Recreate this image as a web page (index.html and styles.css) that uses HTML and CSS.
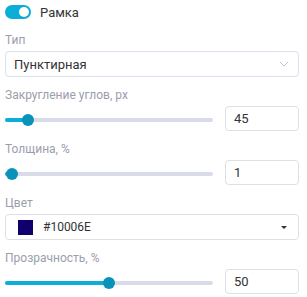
FILE: index.html
```html
<!DOCTYPE html>
<html lang="ru">
<head>
  <meta charset="UTF-8">
  <title>Рамка</title>
  <link rel="stylesheet" href="styles.css">
</head>
<body>
  <div class="panel">
    <!-- Переключатель -->
    <div class="toggle-row">
      <span class="toggle"><span class="knob"></span></span>
      <span class="toggle-label">Рамка</span>
    </div>

    <div class="field">
      <div class="label">Тип</div>
      <div class="select">
        <span class="value">Пунктирная</span>
        <svg class="chevron" width="10" height="6" viewBox="0 0 10 6"><path d="M1 1l4 4 4-4" fill="none" stroke="#c3c7d9" stroke-width="1"/></svg>
      </div>
    </div>

    <div class="field">
      <div class="label">Закругление углов, px</div>
      <div class="slider-row">
        <div class="track"><div class="fill" style="width: 23px"></div><div class="thumb" style="left: 23px"></div></div>
        <div class="num">45</div>
      </div>
    </div>

    <div class="field">
      <div class="label">Толщина, %</div>
      <div class="slider-row">
        <div class="track"><div class="fill" style="width: 7px"></div><div class="thumb" style="left: 7px"></div></div>
        <div class="num">1</div>
      </div>
    </div>

    <div class="field">
      <div class="label">Цвет</div>
      <div class="select color-select">
        <span class="swatch"></span>
        <span class="hex">#10006E</span>
        <span class="caret"></span>
      </div>
    </div>

    <div class="field">
      <div class="label">Прозрачность, %</div>
      <div class="slider-row">
        <div class="track"><div class="fill" style="width: 104px"></div><div class="thumb" style="left: 104px"></div></div>
        <div class="num">50</div>
      </div>
    </div>
  </div>
</body>
</html>
```

FILE: styles.css
```css
/* Basis */
body {
  margin: 0;
  background: #fff;
  font-family: Roboto, "Noto Sans", Arial, sans-serif;
  color: #333;
}
.panel {
  padding: 5px 8px 0 5px;
}
/* Toggle */
.toggle-row {
  display: flex;
  align-items: center;
  gap: 9px;
  height: 14px;
}
.toggle {
  position: relative;
  width: 26px;
  height: 14px;
  border-radius: 7px;
  background: #0aaed6;
}
.toggle .knob {
  position: absolute;
  right: 2px;
  top: 2px;
  width: 10px;
  height: 10px;
  border-radius: 50%;
  background: #fff;
}
.toggle-label {
  font-size: 13px;
  color: #333;
}
/* Felder */
.field {
  margin-top: 10px;
}
.toggle-row + .field {
  margin-top: 13px;
}
.label {
  font-size: 12px;
  line-height: 16px;
  color: #9a9eab;
  margin-bottom: 3px;
}
.select {
  height: 24px;
  border: 1px solid #dcdff0;
  border-radius: 4px;
  display: flex;
  align-items: center;
  padding: 0 9px 0 8px;
  font-size: 13px;
  color: #333;
}
.select .value {
  flex: 1;
}
.chevron {
  display: block;
}
/* Farbe */
.color-select {
  border-color: #dcdfe6;
  padding-left: 12px;
}
.color-select .swatch {
  flex: 0 0 15px;
  height: 15px;
  background: #10006e;
}
.color-select .hex {
  flex: 1;
  margin-left: 10px;
  font-size: 12px;
}
.caret {
  width: 0;
  height: 0;
  border-left: 3px solid transparent;
  border-right: 3px solid transparent;
  border-top: 3px solid #333;
  margin-right: 2px;
}
/* Slider */
.slider-row {
  display: flex;
  align-items: center;
  gap: 12px;
}
.track {
  flex: 1;
  position: relative;
  height: 4px;
  border-radius: 2px;
  background: #d9dce8;
  margin-top: 3px;
}
.fill {
  height: 4px;
  border-radius: 2px;
  background: #0aaed6;
}
.thumb {
  position: absolute;
  top: -4px;
  width: 12px;
  height: 12px;
  margin-left: -6px;
  border-radius: 50%;
  background: #0a93b8;
}
.num {
  width: 64px;
  height: 23px;
  border: 1px solid #dcdfe6;
  border-radius: 4px;
  padding-left: 8px;
  font-size: 13px;
  line-height: 23px;
  color: #333;
}
```
